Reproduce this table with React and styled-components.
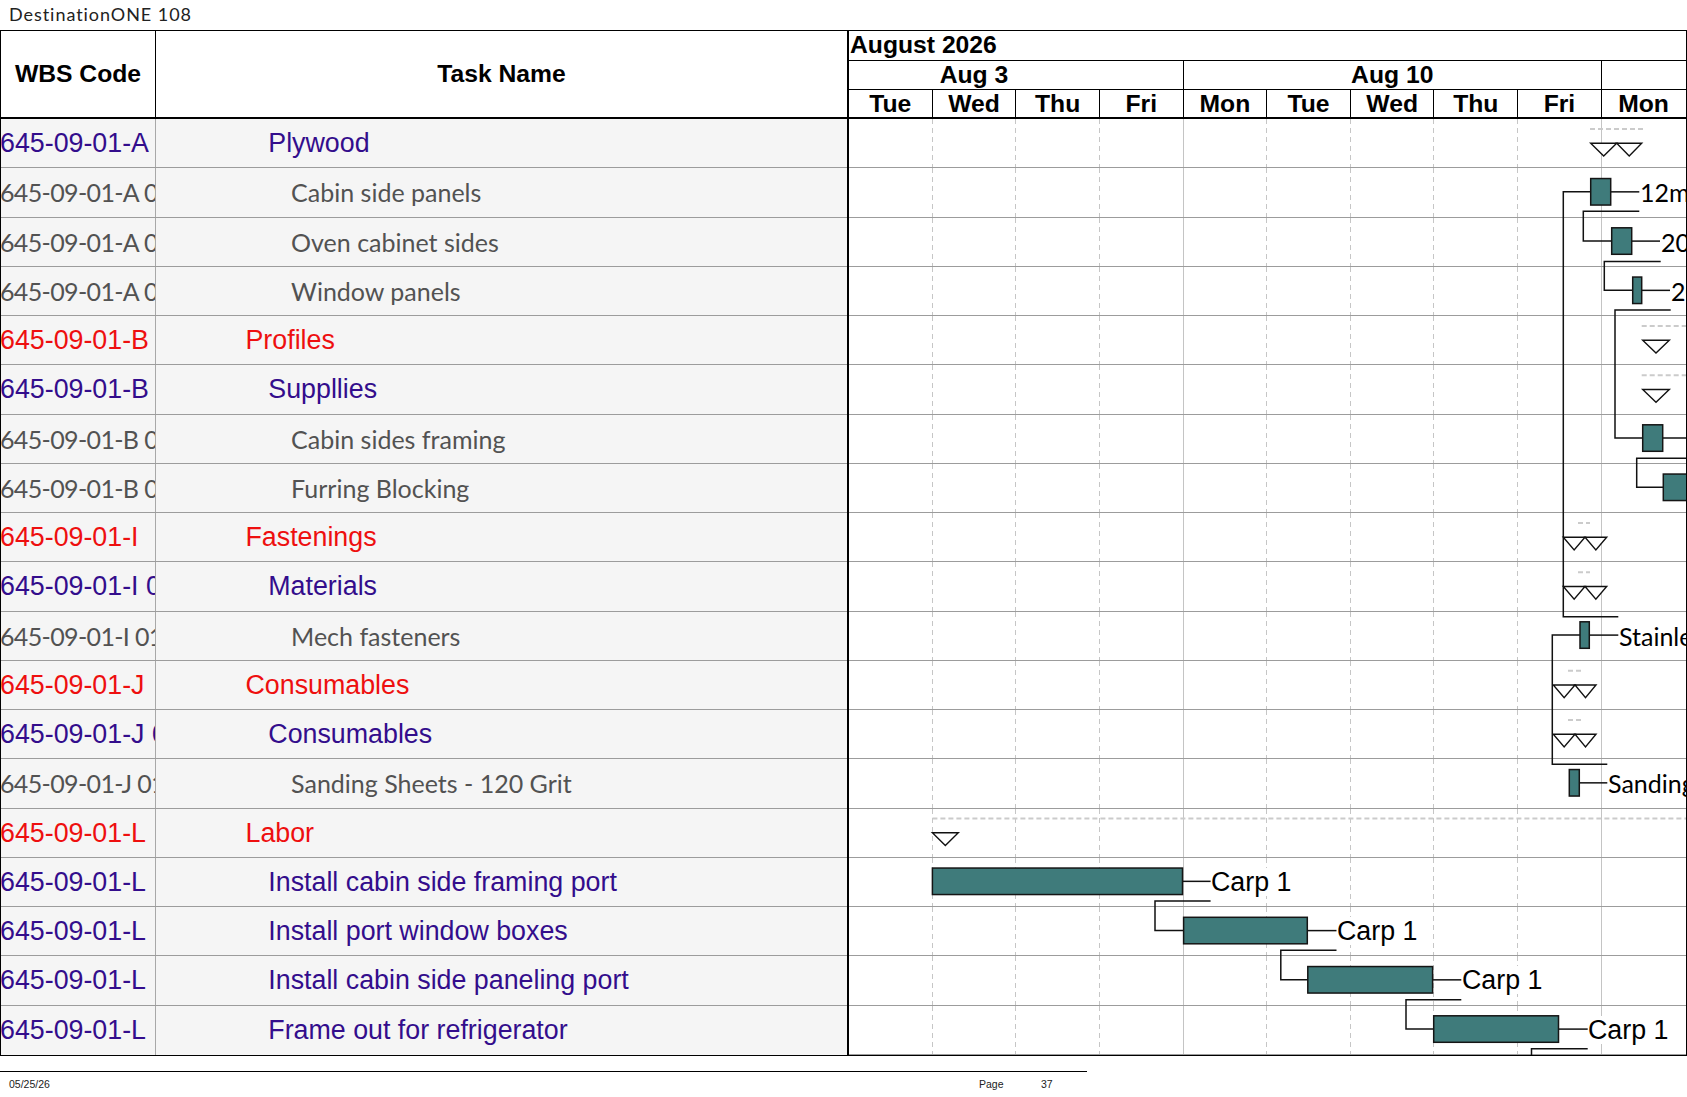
import React from 'react';
import styled, { createGlobalStyle } from 'styled-components';

const DW = 83.65;
const ROW_H = 49.25;
const GX = 849;
const BODY_W = DW * 10;
const BODY_H = ROW_H * 19;
const MID = 23.6;

const GlobalStyle = createGlobalStyle`
  html, body { margin: 0; padding: 0; background: #ffffff; }
  body { font-family: "Liberation Sans", Arial, sans-serif; color: #000; }
  * { box-sizing: border-box; }
`;

const ARIAL = '"Liberation Sans", Arial, sans-serif';
const CALIBRI = 'Lato, "Open Sans", sans-serif';

const TONES = {
  red: { color: '#ee0f0f', font: ARIAL },
  purple: { color: '#330d8c', font: ARIAL },
  grey: { color: '#525252', font: CALIBRI },
};

const rows = [
  { wbs: '645-09-01-A', name: 'Plywood', tone: 'purple', level: 2 },
  { wbs: '645-09-01-A 01', name: 'Cabin side panels', tone: 'grey', level: 3 },
  { wbs: '645-09-01-A 02', name: 'Oven cabinet sides', tone: 'grey', level: 3 },
  { wbs: '645-09-01-A 03', name: 'Window panels', tone: 'grey', level: 3 },
  { wbs: '645-09-01-B', name: 'Profiles', tone: 'red', level: 1 },
  { wbs: '645-09-01-B', name: 'Suppllies', tone: 'purple', level: 2 },
  { wbs: '645-09-01-B 01', name: 'Cabin sides framing', tone: 'grey', level: 3 },
  { wbs: '645-09-01-B 02', name: 'Furring Blocking', tone: 'grey', level: 3 },
  { wbs: '645-09-01-I', name: 'Fastenings', tone: 'red', level: 1 },
  { wbs: '645-09-01-I 01', name: 'Materials', tone: 'purple', level: 2 },
  { wbs: '645-09-01-I 01', name: 'Mech fasteners', tone: 'grey', level: 3 },
  { wbs: '645-09-01-J', name: 'Consumables', tone: 'red', level: 1 },
  { wbs: '645-09-01-J 01', name: 'Consumables', tone: 'purple', level: 2 },
  { wbs: '645-09-01-J 01', name: 'Sanding Sheets - 120 Grit', tone: 'grey', level: 3 },
  { wbs: '645-09-01-L', name: 'Labor', tone: 'red', level: 1 },
  { wbs: '645-09-01-L', name: 'Install cabin side framing port', tone: 'purple', level: 2 },
  { wbs: '645-09-01-L', name: 'Install port window boxes', tone: 'purple', level: 2 },
  { wbs: '645-09-01-L', name: 'Install cabin side paneling port', tone: 'purple', level: 2 },
  { wbs: '645-09-01-L', name: 'Frame out for refrigerator', tone: 'purple', level: 2 },
];

const days = ['Tue', 'Wed', 'Thu', 'Fri', 'Mon', 'Tue', 'Wed', 'Thu', 'Fri', 'Mon'];
const weeks = [
  { label: 'Aug 3', span: 4, hidden: 1 },
  { label: 'Aug 10', span: 5, hidden: 0 },
  { label: '', span: 1, hidden: 0 },
];

const bars = [
  { row: 1, x1: 1590.7, x2: 1610.7, end: 1639.3 },
  { row: 2, x1: 1611.7, x2: 1631.7, end: 1660 },
  { row: 3, x1: 1632.7, x2: 1641.7, end: 1670 },
  { row: 6, x1: 1642.7, x2: 1662.7, end: 1700 },
  { row: 7, x1: 1663.3, x2: 1720, end: 1720 },
  { row: 10, x1: 1580, x2: 1589.3, end: 1618.3 },
  { row: 13, x1: 1569.3, x2: 1579.3, end: 1607.3 },
  { row: 15, x1: 932.4, x2: 1182.5, end: 1210.6 },
  { row: 16, x1: 1183.6, x2: 1307.3, end: 1336.5 },
  { row: 17, x1: 1307.8, x2: 1432.6, end: 1461.3 },
  { row: 18, x1: 1433.7, x2: 1558.5, end: 1587.7 },
];

const links = [
  [[1639.3, 1, 43], [1583.3, 1, 43], [1583.3, 2, MID], [1611.7, 2, MID]],
  [[1660.7, 2, 44], [1604.3, 2, 44], [1604.3, 3, MID], [1632.7, 3, MID]],
  [[1670.7, 3, 43.3], [1615, 3, 43.3], [1615, 6, MID], [1642.7, 6, MID]],
  [[1700, 6, 43.8], [1636.7, 6, 43.8], [1636.7, 7, MID], [1663.3, 7, MID]],
  [[1590.7, 1, MID], [1563.3, 1, MID], [1563.3, 10, 5.2], [1618.3, 10, 5.2]],
  [[1580, 10, MID], [1552.3, 10, MID], [1552.3, 13, 5], [1607.3, 13, 5]],
  [[1210.6, 15, 43.3], [1155, 15, 43.3], [1155, 16, MID], [1183.6, 16, MID]],
  [[1336.5, 16, 43.3], [1280.8, 16, 43.3], [1280.8, 17, MID], [1307.8, 17, MID]],
  [[1461.3, 17, 43.4], [1406, 17, 43.4], [1406, 18, MID], [1433.7, 18, MID]],
  [[1587.7, 18, 43.2], [1531.5, 18, 43.2], [1531.5, 18, 70]],
];

const summaries = [
  { row: 0, dash: [1590, 1643], tris: [[1590.7, 1616.7], [1616.7, 1641.7]] },
  { row: 4, dash: [1641.7, 1700], tris: [[1642.7, 1669.3]] },
  { row: 5, dash: [1641.7, 1700], tris: [[1642.7, 1669.3]] },
  { row: 8, dash: [1578, 1590], tris: [[1563.3, 1585], [1585, 1606.7]] },
  { row: 9, dash: [1578, 1590], tris: [[1563.3, 1585], [1585, 1606.7]] },
  { row: 11, dash: [1568, 1582], tris: [[1553.3, 1575], [1575, 1596]] },
  { row: 12, dash: [1568, 1582], tris: [[1553.3, 1575], [1575, 1596]] },
  { row: 14, dash: [932.4, 1700], tris: [[932.4, 958.3]] },
];

const labels = [
  { row: 1, x: 1640, text: '12mm Plywood', font: 'calibri' },
  { row: 2, x: 1661, text: '20mm Plywood', font: 'calibri' },
  { row: 3, x: 1671, text: '20mm Plywood', font: 'calibri' },
  { row: 10, x: 1619, text: 'Stainless', font: 'calibri' },
  { row: 13, x: 1608, text: 'Sanding', font: 'calibri' },
  { row: 15, x: 1211, text: 'Carp 1', font: 'arial' },
  { row: 16, x: 1337, text: 'Carp 1', font: 'arial' },
  { row: 17, x: 1462, text: 'Carp 1', font: 'arial' },
  { row: 18, x: 1588, text: 'Carp 1', font: 'arial' },
];

const lx = (px) => px - GX;
const ly = (row, dy) => row * ROW_H + dy;

/* ---------- layout ---------- */

const Page = styled.div`
  width: 1687px;
  min-height: 1097px;
  background: #fff;
`;

const TitleBar = styled.div`
  height: 30px;
  padding-left: 9px;
  font-family: Lato, "DejaVu Sans", sans-serif;
  font-size: 18px;
  line-height: 29px;
  color: #222;
  letter-spacing: 0.95px;
`;

const Sheet = styled.div`
  display: flex;
  width: 1686.5px;
  border: 1px solid #000;
`;

const LeftPane = styled.div`
  width: 846px;
  flex: none;
  display: flex;
  flex-direction: column;
`;

const LeftHeader = styled.div`
  display: flex;
  height: 88px;
  border-bottom: 2px solid #000;
`;

const HeadCell = styled.div`
  width: ${(p) => p.$w}px;
  flex: none;
  display: flex;
  align-items: center;
  justify-content: center;
  font-family: ${ARIAL};
  font-weight: 700;
  font-size: 24.7px;
  border-right: ${(p) => (p.$divider ? '1px solid #000' : 'none')};
`;

const TableRow = styled.div`
  display: flex;
  height: ${ROW_H}px;
  background: #f5f5f5;
  border-bottom: 1px solid #9c9c9c;
  &:last-child { border-bottom: none; }
`;

const WbsCell = styled.div`
  width: 156px;
  flex: none;
  border-right: 1px solid #a8a8a8;
  overflow: hidden;
  white-space: nowrap;
  font-family: ${(p) => TONES[p.$tone].font};
  color: ${(p) => TONES[p.$tone].color};
  font-size: ${(p) => (p.$tone === 'grey' ? '25px' : '26.8px')};
  letter-spacing: ${(p) => (p.$tone === 'grey' ? '-0.65px' : '0')};
  line-height: ${ROW_H - 1}px;
  margin-left: -1px;
`;

const TaskCell = styled.div`
  flex: 1;
  overflow: hidden;
  white-space: nowrap;
  padding-left: ${(p) => 89.5 + (p.$level - 1) * 22.8}px;
  font-family: ${(p) => TONES[p.$tone].font};
  color: ${(p) => TONES[p.$tone].color};
  font-size: ${(p) => (p.$tone === 'grey' ? '25px' : '26.8px')};
  line-height: ${ROW_H - 1}px;
`;

const GanttPane = styled.div`
  width: ${BODY_W + 2}px;
  flex: none;
  border-left: 2px solid #000;
  display: flex;
  flex-direction: column;
`;

const GanttHeader = styled.div`
  height: 88px;
  border-bottom: 2px solid #000;
  display: flex;
  flex-direction: column;
  font-family: ${ARIAL};
  font-weight: 700;
  font-size: 24.7px;
`;

const MonthRow = styled.div`
  height: 29.5px;
  border-bottom: 1px solid #000;
  padding-left: 1px;
  line-height: 28.5px;
  white-space: nowrap;
`;

const WeekRow = styled.div`
  height: 29px;
  display: flex;
  border-bottom: 1px solid #000;
`;

const WeekCell = styled.div`
  width: ${(p) => p.$span * DW}px;
  flex: none;
  border-right: ${(p) => (p.$last ? 'none' : '1px solid #000')};
  padding-right: ${(p) => p.$hidden * DW}px;
  text-align: center;
  line-height: 28px;
  white-space: nowrap;
  overflow: hidden;
`;

const DayRow = styled.div`
  height: 27.5px;
  display: flex;
`;

const DayHead = styled.div`
  width: ${DW}px;
  flex: none;
  border-right: ${(p) => (p.$last ? 'none' : '1px solid #000')};
  text-align: center;
  line-height: 28px;
`;

const GanttBody = styled.div`
  position: relative;
  height: ${BODY_H}px;
  overflow: hidden;
  background: #fff;
`;

const GanttRow = styled.div`
  display: flex;
  height: ${ROW_H}px;
  border-bottom: 1px solid #9c9c9c;
  &:last-child { border-bottom: none; }
`;

const DayCell = styled.div`
  width: ${DW}px;
  flex: none;
  background: ${(p) =>
    p.$kind === 'solid'
      ? 'linear-gradient(#c4c4c4, #c4c4c4) right top / 1px 100% no-repeat'
      : p.$kind === 'dashed'
      ? 'linear-gradient(#c6c6c6 55%, transparent 55%) right top / 1px 9px repeat-y'
      : 'none'};
`;

const ChartLayer = styled.svg`
  position: absolute;
  left: 0;
  top: 0;
  overflow: hidden;
  pointer-events: none;
`;

const BarLabel = styled.span`
  position: absolute;
  height: 28px;
  line-height: 28px;
  padding-right: 2px;
  background: #fff;
  white-space: nowrap;
  color: #000;
  font-family: ${(p) => (p.$font === 'arial' ? ARIAL : CALIBRI)};
  font-size: ${(p) => (p.$font === 'arial' ? '26.8px' : '25px')};
`;

const Footer = styled.div`
  margin-top: 15px;
  width: 1087px;
  height: 26px;
  border-top: 1px solid #000;
  display: grid;
  grid-template-columns: 979px 62px 1fr;
  align-items: center;
  font-family: ${ARIAL};
  font-size: 10.5px;
  color: #222;
`;

const FootDate = styled.span`
  padding-left: 9px;
`;

/* ---------- chart ---------- */

function Chart() {
  return (
    <ChartLayer width={BODY_W} height={BODY_H} viewBox={`0 0 ${BODY_W} ${BODY_H}`}>
      {summaries.map((s, i) => (
        <g key={`s${i}`}>
          <line
            x1={lx(s.dash[0])}
            x2={lx(s.dash[1])}
            y1={ly(s.row, 10)}
            y2={ly(s.row, 10)}
            stroke="#cbcbcb"
            strokeWidth="2"
            strokeDasharray="5 3"
          />
          {s.tris.map(([a, b], j) => (
            <polygon
              key={j}
              points={`${lx(a)},${ly(s.row, 24.3)} ${lx(b)},${ly(s.row, 24.3)} ${lx((a + b) / 2)},${ly(s.row, 37)}`}
              fill="#fff"
              stroke="#111"
              strokeWidth="1.4"
            />
          ))}
        </g>
      ))}
      {links.map((pts, i) => (
        <polyline
          key={`l${i}`}
          points={pts.map(([x, r, d]) => `${lx(x)},${ly(r, d)}`).join(' ')}
          fill="none"
          stroke="#111"
          strokeWidth="1.5"
        />
      ))}
      {bars.map((b, i) => (
        <g key={`b${i}`}>
          <line
            x1={lx(b.x2)}
            x2={lx(b.end)}
            y1={ly(b.row, MID)}
            y2={ly(b.row, MID)}
            stroke="#111"
            strokeWidth="1.5"
          />
          <rect
            x={lx(b.x1)}
            y={ly(b.row, 10.3)}
            width={b.x2 - b.x1}
            height={26.5}
            fill="#3f7b7b"
            stroke="#151515"
            strokeWidth="1.5"
          />
        </g>
      ))}
    </ChartLayer>
  );
}

export default function App() {
  return (
    <Page>
      <GlobalStyle />
      <TitleBar>DestinationONE 108</TitleBar>
      <Sheet>
        <LeftPane>
          <LeftHeader>
            <HeadCell $w={155} $divider>WBS Code</HeadCell>
            <HeadCell $w={691}>Task Name</HeadCell>
          </LeftHeader>
          {rows.map((r, i) => (
            <TableRow key={i}>
              <WbsCell $tone={r.tone}>{r.wbs}</WbsCell>
              <TaskCell $tone={r.tone} $level={r.level}>{r.name}</TaskCell>
            </TableRow>
          ))}
        </LeftPane>
        <GanttPane>
          <GanttHeader>
            <MonthRow>August 2026</MonthRow>
            <WeekRow>
              {weeks.map((w, i) => (
                <WeekCell key={i} $span={w.span} $hidden={w.hidden} $last={i === weeks.length - 1}>
                  {w.label}
                </WeekCell>
              ))}
            </WeekRow>
            <DayRow>
              {days.map((d, i) => (
                <DayHead key={i} $last={i === days.length - 1}>{d}</DayHead>
              ))}
            </DayRow>
          </GanttHeader>
          <GanttBody>
            {rows.map((r, i) => (
              <GanttRow key={i}>
                {days.map((d, j) => (
                  <DayCell key={j} $kind={j === 9 ? 'none' : j === 3 || j === 8 ? 'solid' : 'dashed'} />
                ))}
              </GanttRow>
            ))}
            <Chart />
            {labels.map((l, i) => (
              <BarLabel
                key={i}
                $font={l.font}
                style={{ left: lx(l.x), top: ly(l.row, 10) }}
              >
                {l.text}
              </BarLabel>
            ))}
          </GanttBody>
        </GanttPane>
      </Sheet>
      <Footer>
        <FootDate>05/25/26</FootDate>
        <span>Page</span>
        <span>37</span>
      </Footer>
    </Page>
  );
}
